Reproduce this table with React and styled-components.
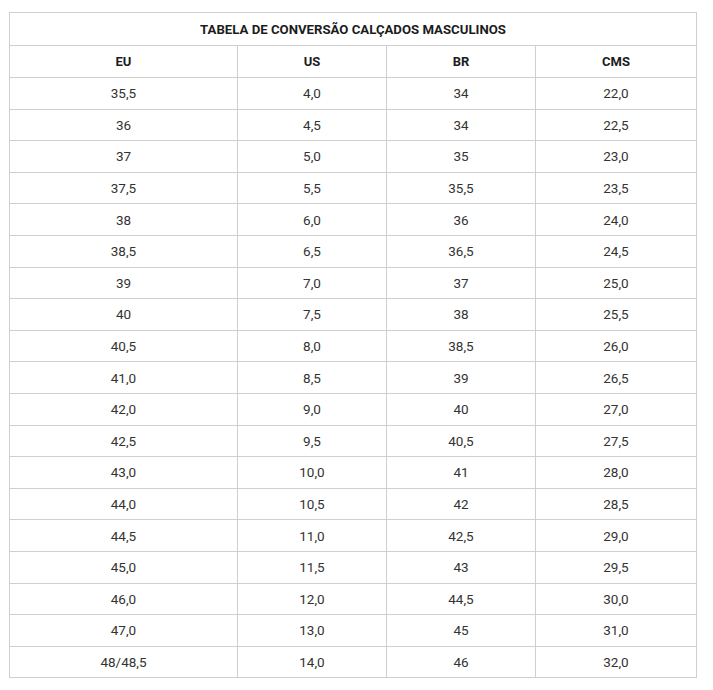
import React from "react";
import styled, { createGlobalStyle } from "styled-components";

const Global = createGlobalStyle`
  html, body { margin: 0; padding: 0; background: #fff; }
  body { font-family: Roboto, "Liberation Sans", sans-serif; }
`;

const Page = styled.div`
  padding: 12px 0 0 9px;
`;

const Table = styled.table`
  width: 687px;
  border-collapse: collapse;
  table-layout: fixed;
  font-family: Roboto, "Liberation Sans", sans-serif;
`;

const TitleCell = styled.th`
  height: 32px;
  border: 1px solid #cfcfcf;
  font-size: 13.2px;
  font-weight: 700;
  color: #1c1c1c;
  text-align: center;
  vertical-align: middle;
  padding: 0;
`;

const HeadCell = styled.th`
  height: 31px;
  border: 1px solid #cfcfcf;
  font-size: 13px;
  font-weight: 700;
  color: #1c1c1c;
  text-align: center;
  vertical-align: middle;
  padding: 0;
`;

const Row = styled.tr`
  height: 31.6px;
`;

const Cell = styled.td`
  border: 1px solid #cfcfcf;
  font-size: 13.5px;
  font-weight: 400;
  color: #333;
  text-align: center;
  vertical-align: middle;
  padding: 0;
`;

const rows = [
  ["35,5", "4,0", "34", "22,0"],
  ["36", "4,5", "34", "22,5"],
  ["37", "5,0", "35", "23,0"],
  ["37,5", "5,5", "35,5", "23,5"],
  ["38", "6,0", "36", "24,0"],
  ["38,5", "6,5", "36,5", "24,5"],
  ["39", "7,0", "37", "25,0"],
  ["40", "7,5", "38", "25,5"],
  ["40,5", "8,0", "38,5", "26,0"],
  ["41,0", "8,5", "39", "26,5"],
  ["42,0", "9,0", "40", "27,0"],
  ["42,5", "9,5", "40,5", "27,5"],
  ["43,0", "10,0", "41", "28,0"],
  ["44,0", "10,5", "42", "28,5"],
  ["44,5", "11,0", "42,5", "29,0"],
  ["45,0", "11,5", "43", "29,5"],
  ["46,0", "12,0", "44,5", "30,0"],
  ["47,0", "13,0", "45", "31,0"],
  ["48/48,5", "14,0", "46", "32,0"],
];

export default function App() {
  return (
    <>
      <Global />
      <Page>
        <Table>
          <colgroup>
            <col style={{ width: "228px" }} />
            <col style={{ width: "149px" }} />
            <col style={{ width: "149px" }} />
            <col style={{ width: "161px" }} />
          </colgroup>
          <thead>
            <tr>
              <TitleCell colSpan={4}>TABELA DE CONVERSÃO CALÇADOS MASCULINOS</TitleCell>
            </tr>
            <tr>
              <HeadCell>EU</HeadCell>
              <HeadCell>US</HeadCell>
              <HeadCell>BR</HeadCell>
              <HeadCell>CMS</HeadCell>
            </tr>
          </thead>
          <tbody>
            {rows.map((r, i) => (
              <Row key={i}>
                {r.map((c, j) => (
                  <Cell key={j}>{c}</Cell>
                ))}
              </Row>
            ))}
          </tbody>
        </Table>
      </Page>
    </>
  );
}
